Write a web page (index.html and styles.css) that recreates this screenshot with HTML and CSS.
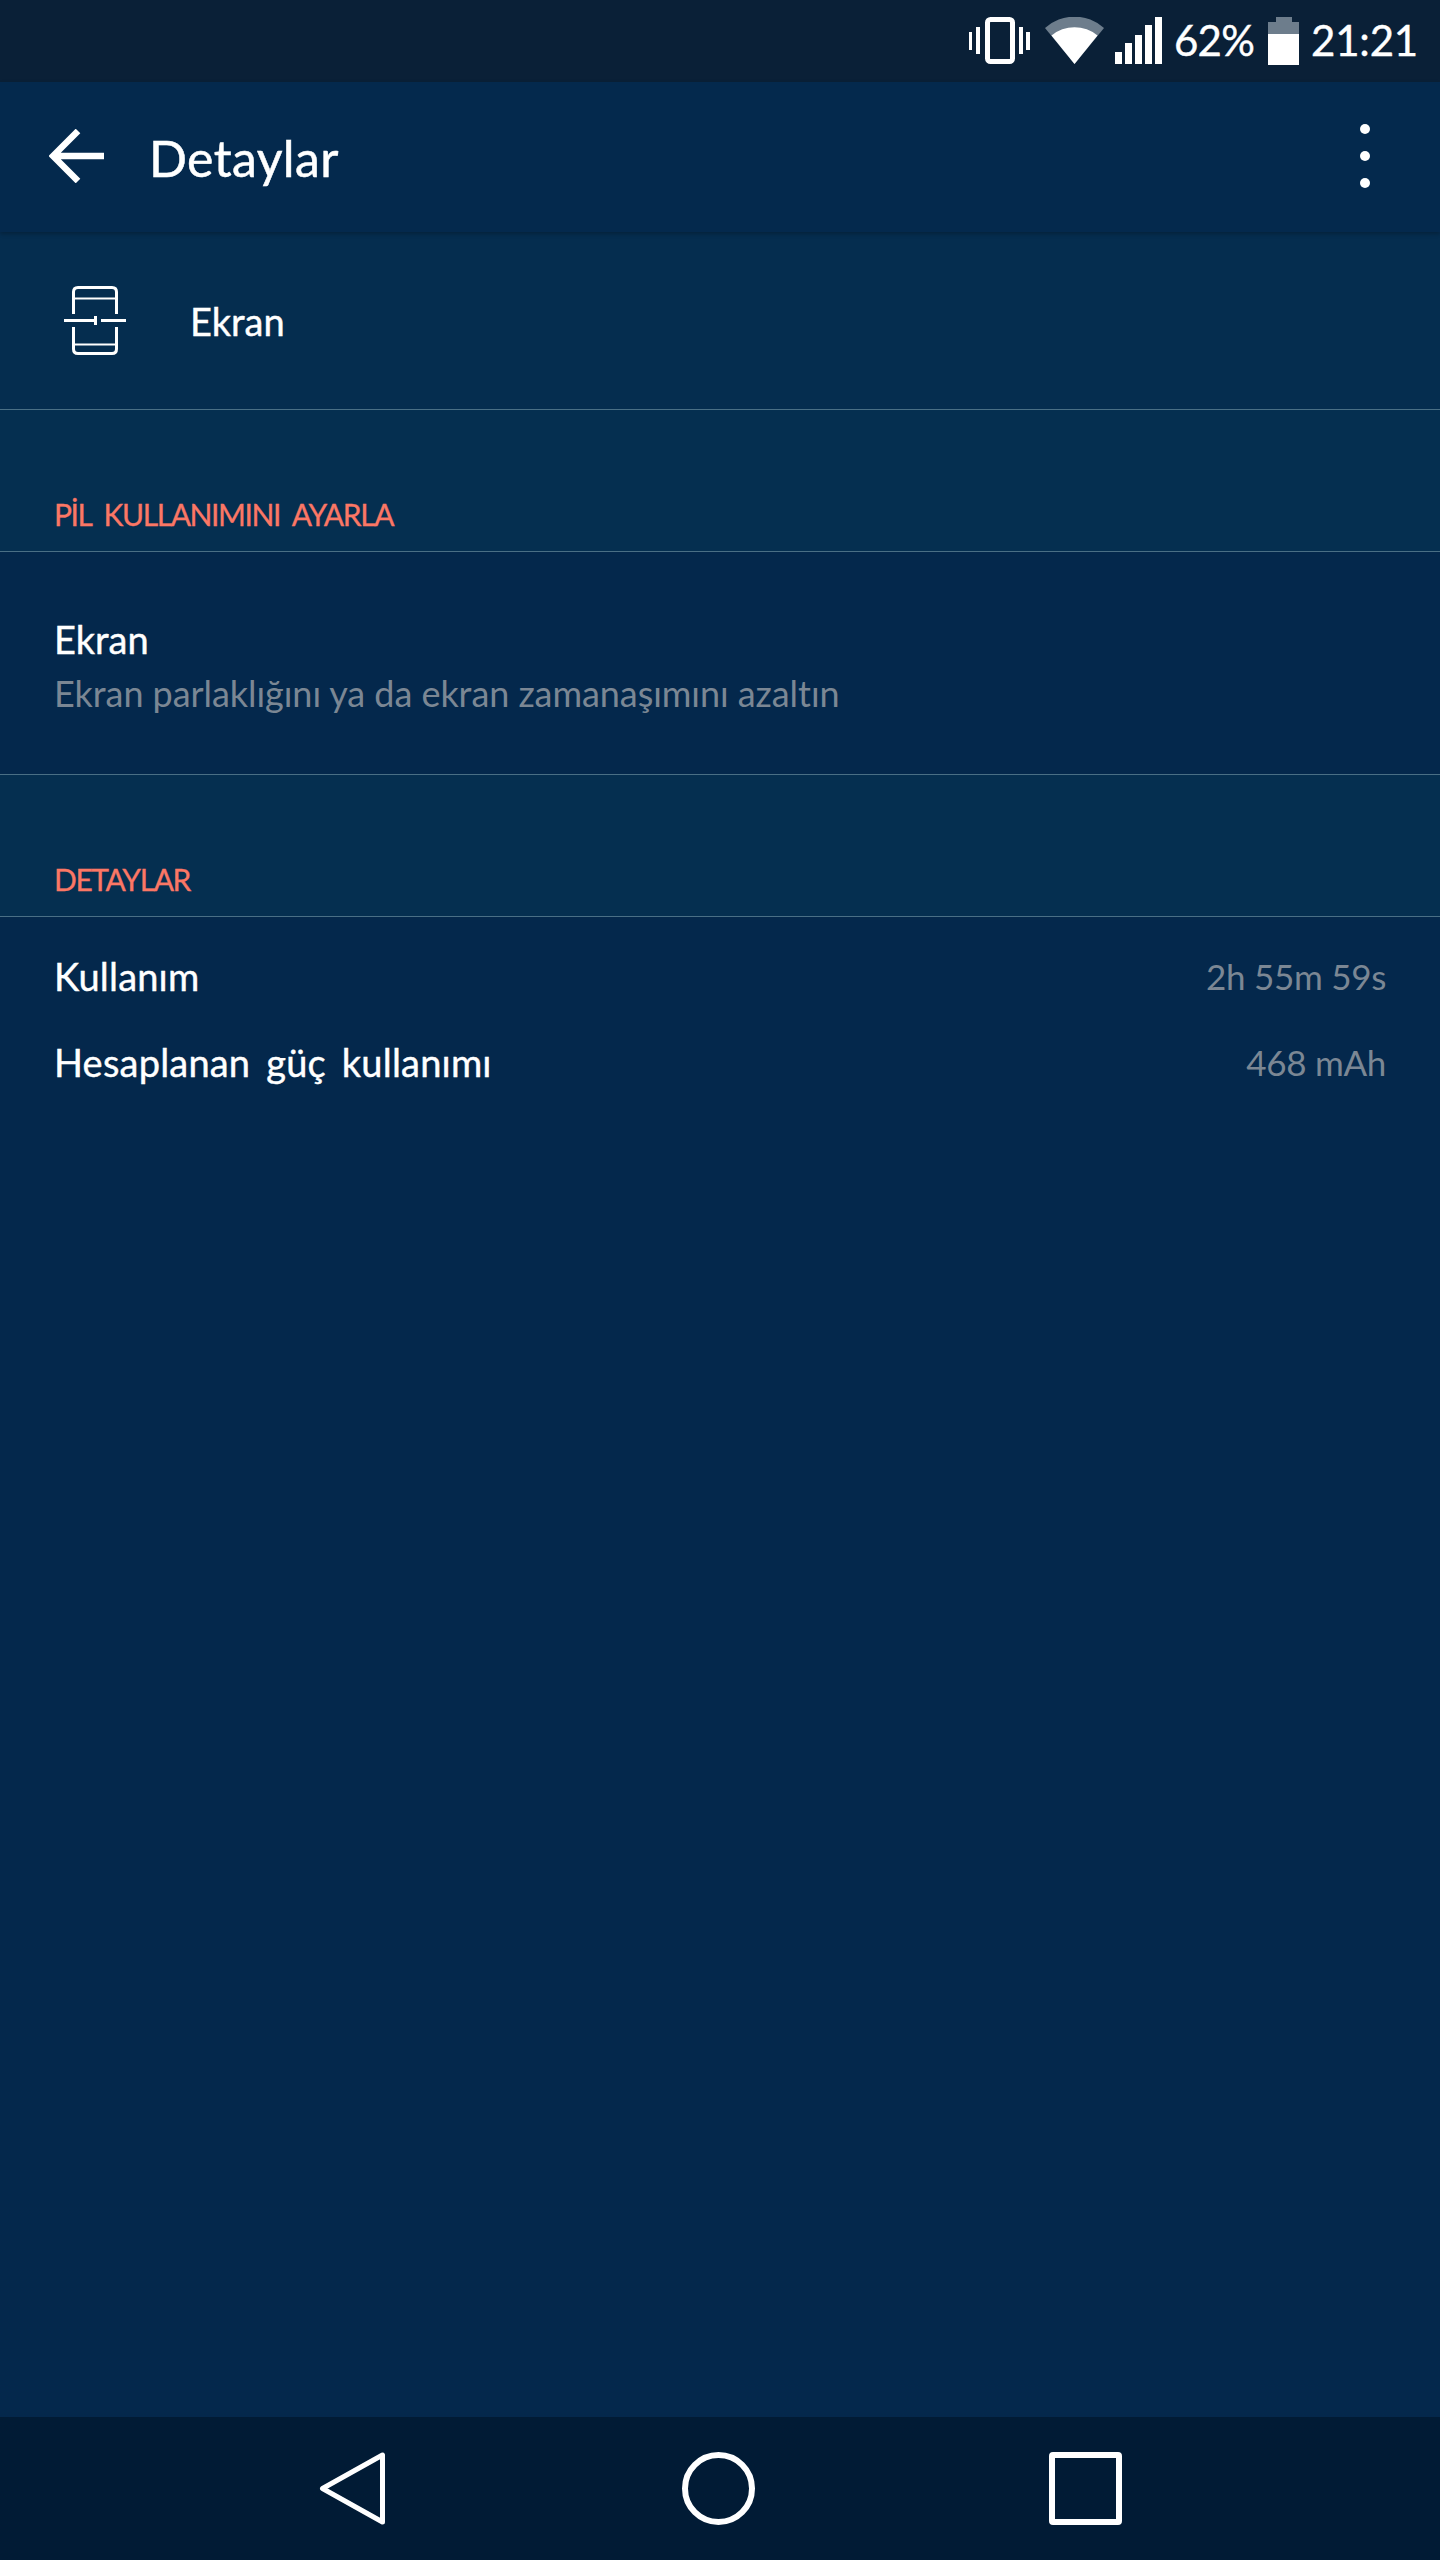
FILE: index.html
```html
<!DOCTYPE html>
<html lang="tr">
<head>
    <meta charset="UTF-8">
    <title>Detaylar</title>
    <link rel="stylesheet" href="styles.css">
</head>
<body>

<div class="status-bar">
    <svg class="ic-vibrate" width="61" height="47" viewBox="0 0 61 47">
        <rect x="18.500" y="2.500" width="25" height="42" rx="3" fill="none" stroke="#fff" stroke-width="5"/>
        <rect x="0" y="15" width="3" height="18" fill="#fff"/>
        <rect x="7" y="10" width="4" height="27" fill="#fff"/>
        <rect x="50" y="10" width="4" height="27" fill="#fff"/>
        <rect x="57" y="15" width="4" height="18" fill="#fff"/>
    </svg>
    <svg class="ic-wifi" width="59" height="47" viewBox="0 0 59 47">
        <path d="M0 11 A44 44 0 0 1 59 11 L29.5 47 Z" fill="#6d7d8c"/>
        <path d="M6.500 18.500 A36 36 0 0 1 52.500 18.500 L29.500 47 Z" fill="#fff"/>
    </svg>
    <svg class="ic-signal" width="47" height="47" viewBox="0 0 47 47">
        <rect x="0" y="35" width="7" height="12" fill="#fff"/>
        <rect x="10" y="26" width="7" height="21" fill="#fff"/>
        <rect x="20" y="18" width="7" height="29" fill="#fff"/>
        <rect x="30" y="8" width="7" height="39" fill="#fff"/>
        <rect x="40" y="0" width="7" height="47" fill="#fff"/>
    </svg>
    <span class="status-text pct">62%</span>
    <svg class="ic-battery" width="31" height="48" viewBox="0 0 31 48">
        <path d="M8 0 H24 V5 H31 V17 H0 V5 H8 Z" fill="#6d7d8c"/>
        <rect x="0" y="17" width="31" height="31" fill="#fff"/>
    </svg>
    <span class="status-text clock">21:21</span>
</div>

<div class="app-bar">
    <svg class="back" width="55" height="54" viewBox="0 0 55 54">
        <path d="M55 27 H5 M29 2 L4 27 L29 52" fill="none" stroke="#fff" stroke-width="6.500"/>
    </svg>
    <div class="app-title">Detaylar</div>
    <div class="more">
        <span class="dot"></span>
        <span class="dot"></span>
        <span class="dot"></span>
    </div>
</div>

<div class="main">
    <div class="app-row">
        <svg class="app-icon" width="62" height="69" viewBox="0 0 62 69">
            <g fill="none" stroke="#fff" stroke-width="3">
                <path d="M9.500 28 V6 Q9.500 1.500 14 1.500 H48 Q52.500 1.500 52.500 6 V28"/>
                <path d="M9.500 41 V63 Q9.500 67.500 14 67.500 H48 Q52.500 67.500 52.500 63 V41"/>
                <path d="M9.500 12.500 H52.500 M9.500 58.500 H52.500" stroke-width="2"/>
                <path d="M0 34.500 H31 M37 34.500 H62"/>
                <path d="M31.500 30 V39"/>
            </g>
        </svg>
        <div class="app-name">Ekran</div>
    </div>

    <div class="section-head">PİL KULLANIMINI AYARLA</div>
    <div class="tip">
        <div class="tip-title">Ekran</div>
        <div class="tip-sub">Ekran parlaklığını ya da ekran zamanaşımını azaltın</div>
    </div>

    <div class="section-head">DETAYLAR</div>
    <div class="details">
        <div class="detail-row">
            <span class="detail-label">Kullanım</span>
            <span class="detail-value">2h 55m 59s</span>
        </div>
        <div class="detail-row">
            <span class="detail-label">Hesaplanan güç kullanımı</span>
            <span class="detail-value">468 mAh</span>
        </div>
    </div>
</div>

<div class="nav-bar">
    <svg width="73" height="73" viewBox="0 0 73 73">
        <path d="M67.500 3 V70 L7.500 36.500 Z" fill="none" stroke="#fff" stroke-width="5" stroke-linejoin="round"/>
    </svg>
    <svg width="73" height="73" viewBox="0 0 73 73">
        <circle cx="36.500" cy="36.500" r="33.500" fill="none" stroke="#fff" stroke-width="6"/>
    </svg>
    <svg width="73" height="73" viewBox="0 0 73 73">
        <rect x="3" y="3" width="67" height="67" rx="1" fill="none" stroke="#fff" stroke-width="6"/>
    </svg>
</div>

</body>
</html>
```

FILE: styles.css
```css
* {
    box-sizing: border-box;
}
body {
    font-family: Lato, "Noto Sans", sans-serif;
    background: #04284c;
    color: #fff;
    margin: 0;
    height: 2560px;
    display: flex;
    flex-direction: column;
}
.status-bar {
    height: 82px;
    background: #0a2037;
    display: flex;
    align-items: flex-start;
    padding: 17px 22px 0 0;
    justify-content: flex-end;
}
.status-text {
    font-size: 42px;
    line-height: 47px;
    letter-spacing: -0.8px;
    -webkit-text-stroke: 0.4px #fff;
}
.ic-wifi {
    margin-left: 15px;
}
.ic-signal {
    margin-left: 11px;
}
.pct {
    margin-left: 12px;
}
.ic-battery {
    margin-left: 14px;
}
.clock {
    margin-left: 12px;
    letter-spacing: -0.2px;
}
.app-bar {
    height: 150px;
    background: #04294d;
    display: flex;
    align-items: center;
    padding: 0 70px 0 49px;
    box-shadow: 0 2px 4px rgba(0,0,0,0.25);
    position: relative;
}
.back {
    margin-top: -2px;
}
.app-title {
    font-size: 50px;
    line-height: 60px;
    letter-spacing: 0.4px;
    margin: 2px 0 0 45px;
    flex: 1;
    -webkit-text-stroke: 0.5px #fff;
}
.more {
    display: flex;
    flex-direction: column;
    gap: 17px;
    margin-top: -2px;
}
.dot {
    width: 10px;
    height: 10px;
    border-radius: 50%;
    background: #fff;
}
.main {
    flex: 1;
}
.app-row {
    height: 178px;
    background: #052d4f;
    border-bottom: 1px solid #4a6f85;
    display: flex;
    align-items: center;
    padding: 0 0 0 64px;
}
.app-name {
    font-size: 38px;
    margin-left: 64px;
    -webkit-text-stroke: 0.4px #fff;
}
.section-head {
    height: 142px;
    background: #052f50;
    border-bottom: 1px solid #4a6f85;
    color: #fb7765;
    font-size: 30px;
    line-height: 36px;
    letter-spacing: -1.4px;
    word-spacing: 6.5px;
    padding: 86px 0 0 54px;
    -webkit-text-stroke: 0.3px #fb7765;
}
.tip {
    height: 223px;
    background: #04284c;
    border-bottom: 1px solid #4a6f85;
    padding: 64px 0 0 54px;
}
.tip-title {
    font-size: 38px;
    line-height: 46px;
    -webkit-text-stroke: 0.4px #fff;
}
.tip-sub {
    font-size: 36px;
    line-height: 46px;
    margin-top: 8px;
    letter-spacing: -0.06px;
    color: #7b8794;
}
.details {
    padding: 16px 54px 0;
}
.detail-row {
    display: flex;
    justify-content: space-between;
    align-items: center;
    height: 86px;
}
.detail-label {
    font-size: 38px;
    letter-spacing: 0.2px;
    word-spacing: 6px;
    -webkit-text-stroke: 0.4px #fff;
}
.detail-value {
    font-size: 35px;
    letter-spacing: -0.3px;
    color: #7b8794;
}
.nav-bar {
    height: 143px;
    background: #011b35;
    display: flex;
    justify-content: center;
    align-items: center;
    gap: 294px;
    padding-right: 3px;
}
```
